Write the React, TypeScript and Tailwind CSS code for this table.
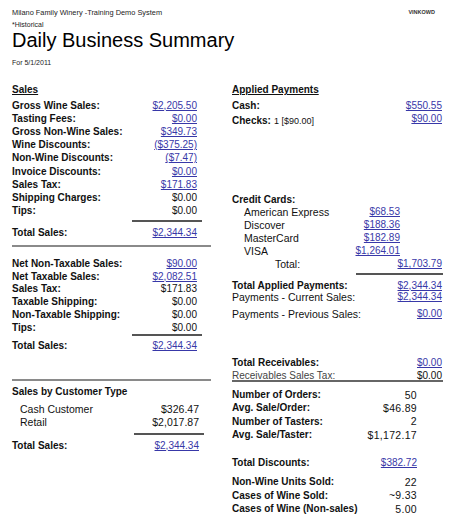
import React from "react";

const LINK = "text-[#3838a8] underline";

function LRow({
  label,
  value,
  link,
  h = "h-[13.2px]",
  pr = "pr-[14px]",
  vcls = "text-[10px]",
}: {
  label: React.ReactNode;
  value: string;
  link?: boolean;
  h?: string;
  pr?: string;
  vcls?: string;
}) {
  return (
    <div className={`flex items-center justify-between ${h} ${pr}`}>
      <span className="font-bold text-[10px] leading-none">{label}</span>
      <span className={`${vcls} leading-none ${link ? LINK : ""}`}>{value}</span>
    </div>
  );
}

export default function App() {
  return (
    <div className="w-[472px] h-[525px] overflow-hidden bg-white pl-[12px] text-[#111] font-['Liberation_Sans',Arial,sans-serif]">
      {/* Header */}
      <div className="flex flex-col">
        <div className="mt-[8px] flex h-[9px] items-center justify-between pr-[37px]">
          <span className="text-[7.4px] leading-none text-[#222]">Milano Family Winery -Training Demo System</span>
          <span className="text-[5.5px] font-bold leading-none text-[#333]">VINKOWD</span>
        </div>
        <div className="mt-[2.5px] flex h-[9px] items-center">
          <span className="text-[7px] leading-none text-[#222]">*Historical</span>
        </div>
        <div className="mt-[1.5px] h-[21px] text-[20px] leading-[21px] text-black">Daily Business Summary</div>
        <div className="mt-[6.5px] flex h-[9px] items-center">
          <span className="text-[7px] leading-none text-[#222]">For 5/1/2011</span>
        </div>
      </div>

      {/* Columns */}
      <div className="mt-[16.5px] flex gap-[21px]">
        {/* Left column */}
        <div className="flex w-[199px] flex-col">
          <div className="flex h-[14px] items-center">
            <span className="text-[10px] font-bold leading-none underline">Sales</span>
          </div>
          <div className="mt-[2px] flex flex-col">
            <LRow label="Gross Wine Sales:" value="$2,205.50" link />
            <LRow label="Tasting Fees:" value="$0.00" link />
            <LRow label="Gross Non-Wine Sales:" value="$349.73" link />
            <LRow label="Wine Discounts:" value="($375.25)" link />
            <LRow label="Non-Wine Discounts:" value="($7.47)" link />
            <LRow label="Invoice Discounts:" value="$0.00" link />
            <LRow label="Sales Tax:" value="$171.83" link />
            <LRow label="Shipping Charges:" value="$0.00" />
            <LRow label="Tips:" value="$0.00" />
          </div>
          <div className="ml-[120px] mt-[2.2px] h-[2px] w-[70px] bg-[#555]" />
          <div className="mt-[4.4px]">
            <LRow label="Total Sales:" value="$2,344.34" link />
          </div>
          <div className="mt-[6px] h-[2px] w-full bg-[#8a8a8a]" />
          <div className="mt-[9.9px] flex flex-col">
            <LRow h="h-[12.8px]" label="Net Non-Taxable Sales:" value="$90.00" link />
            <LRow h="h-[12.8px]" label="Net Taxable Sales:" value="$2,082.51" link />
            <LRow h="h-[12.8px]" label="Sales Tax:" value="$171.83" />
            <LRow h="h-[12.8px]" label="Taxable Shipping:" value="$0.00" />
            <LRow h="h-[12.8px]" label="Non-Taxable Shipping:" value="$0.00" />
            <LRow h="h-[12.8px]" label="Tips:" value="$0.00" />
          </div>
          <div className="ml-[120px] h-[2px] w-[70px] bg-[#555]" />
          <div className="mt-[3.7px]">
            <LRow label="Total Sales:" value="$2,344.34" link />
          </div>
          <div className="mt-[26.4px] h-[2px] w-full bg-[#8a8a8a]" />
          <div className="mt-[4.4px] flex h-[13.2px] items-center">
            <span className="text-[10px] font-bold leading-none">Sales by Customer Type</span>
          </div>
          <div className="mt-[4.35px] flex h-[12.7px] items-center justify-between pl-[8px] pr-[12px]">
            <span className="text-[10.5px] leading-none">Cash Customer</span>
            <span className="text-[10.5px] leading-none">$326.47</span>
          </div>
          <div className="flex h-[12.7px] items-center justify-between pl-[8px] pr-[12px]">
            <span className="text-[10.5px] leading-none">Retail</span>
            <span className="text-[10.5px] leading-none">$2,017.87</span>
          </div>
          <div className="ml-[122px] mt-[4px] h-[2px] w-[70px] bg-[#555]" />
          <div className="mt-[4.4px]">
            <LRow pr="pr-[12px]" label="Total Sales:" value="$2,344.34" link />
          </div>
        </div>

        {/* Right column */}
        <div className="flex w-[211px] flex-col">
          <div className="flex h-[14px] items-center">
            <span className="text-[10px] font-bold leading-none underline">Applied Payments</span>
          </div>
          <div className="mt-[3px] flex h-[12.5px] items-center justify-between pr-[1px]">
            <span className="text-[10px] font-bold leading-none">Cash:</span>
            <span className={`text-[10px] leading-none ${LINK}`}>$550.55</span>
          </div>
          <div className="flex h-[12.5px] items-center justify-between pr-[1px]">
            <span className="leading-none">
              <span className="text-[10px] font-bold">Checks:</span>
              <span className="ml-[3px] text-[9px]">1 [$90.00]</span>
            </span>
            <span className={`text-[10px] leading-none ${LINK}`}>$90.00</span>
          </div>
          <div className="mt-[68.5px] flex h-[12px] items-center">
            <span className="text-[10px] font-bold leading-none">Credit Cards:</span>
          </div>
          {[
            ["American Express", "$68.53"],
            ["Discover", "$188.36"],
            ["MasterCard", "$182.89"],
            ["VISA", "$1,264.01"],
          ].map(([n, v]) => (
            <div key={n} className="flex h-[13px] items-center justify-between pl-[12px] pr-[43px]">
              <span className="text-[10.5px] leading-none">{n}</span>
              <span className={`text-[10px] leading-none ${LINK}`}>{v}</span>
            </div>
          ))}
          <div className="flex h-[13px] items-center justify-between pl-[43px] pr-[1px]">
            <span className="text-[10.5px] leading-none">Total:</span>
            <span className={`text-[10px] leading-none ${LINK}`}>$1,703.79</span>
          </div>
          <div className="ml-[124px] mt-[2.5px] h-[2px] w-[87px] bg-[#555]" />
          <div className="mt-[4.7px] flex h-[12px] items-center justify-between pr-[1px]">
            <span className="text-[10px] font-bold leading-none">Total Applied Payments:</span>
            <span className={`text-[10px] leading-none ${LINK}`}>$2,344.34</span>
          </div>
          <div className="flex h-[11.2px] items-center justify-between pr-[1px]">
            <span className="text-[10.5px] leading-none">Payments - Current Sales:</span>
            <span className={`text-[10px] leading-none ${LINK}`}>$2,344.34</span>
          </div>
          <div className="mt-[4.6px] flex h-[13px] items-center justify-between pr-[1px]">
            <span className="text-[10.5px] leading-none">Payments - Previous Sales:</span>
            <span className={`text-[10px] leading-none ${LINK}`}>$0.00</span>
          </div>
          <div className="mt-[36.3px] flex h-[13px] items-center justify-between pr-[1px]">
            <span className="text-[10px] font-bold leading-none">Total Receivables:</span>
            <span className={`text-[10px] leading-none ${LINK}`}>$0.00</span>
          </div>
          <div className="flex h-[10.5px] items-end justify-between pr-[1px]">
            <span className="text-[10px] leading-[9px] text-[#444]">Receivables Sales Tax:</span>
            <span className="text-[10px] leading-[9px]">$0.00</span>
          </div>
          <div className="h-[1.5px] w-full bg-[#666]" />
          <div className="mt-[6.7px] flex flex-col">
            {[
              ["Number of Orders:", "50"],
              ["Avg. Sale/Order:", "$46.89"],
              ["Number of Tasters:", "2"],
              ["Avg. Sale/Taster:", "$1,172.17"],
            ].map(([l, v]) => (
              <LRow key={l} h="h-[13.3px]" pr="pr-[26px]" vcls="text-[10.5px] tracking-[0.3px]" label={l} value={v} />
            ))}
          </div>
          <div className="mt-[14.8px]">
            <LRow h="h-[13px]" pr="pr-[26px]" label="Total Discounts:" value="$382.72" link />
          </div>
          <div className="mt-[6px] flex flex-col">
            <LRow h="h-[13.5px]" pr="pr-[26px]" vcls="text-[10.5px] tracking-[0.3px]" label="Non-Wine Units Sold:" value="22" />
            <LRow h="h-[13.5px]" pr="pr-[26px]" vcls="text-[10.5px] tracking-[0.3px]" label="Cases of Wine Sold:" value="~9.33" />
            <LRow h="h-[13.5px]" pr="pr-[26px]" vcls="text-[10.5px] tracking-[0.3px]" label="Cases of Wine (Non-sales)" value="5.00" />
          </div>
        </div>
      </div>
    </div>
  );
}
